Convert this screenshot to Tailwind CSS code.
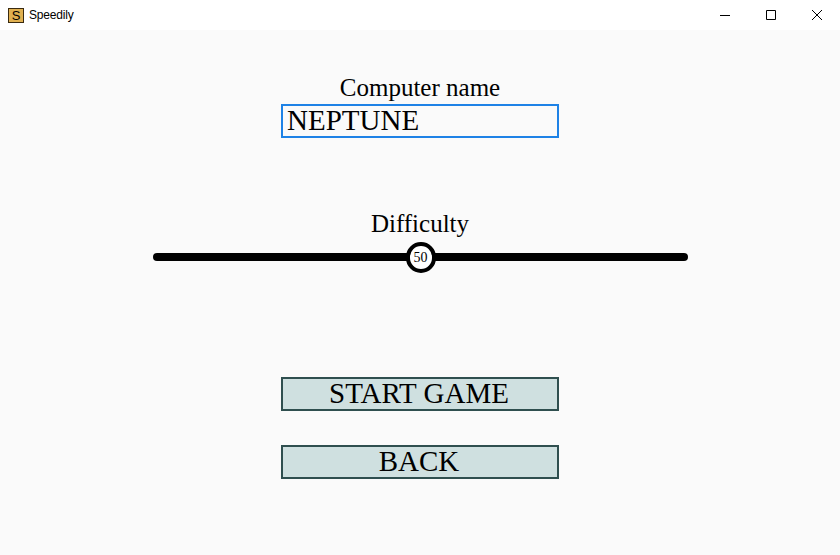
<!DOCTYPE html>
<html lang="en">
<head>
    <meta charset="UTF-8">
    <title>Speedily</title>
    <script src="https://cdn.jsdelivr.net/npm/@tailwindcss/browser@4"></script>
</head>
<body class="w-[840px] h-[555px] overflow-hidden bg-[#fafafa] font-['Liberation_Serif',serif] text-black">
    <!-- title bar -->
    <div class="h-[30px] bg-white flex items-center">
        <div class="ml-2 w-[16px] h-[15px] bg-[#e0b050] border border-[#3a2a10] flex items-center justify-center font-['Liberation_Sans',sans-serif] text-[13px] leading-none">S</div>
        <span class="ml-[5px] font-['Liberation_Sans',sans-serif] text-[12px] tracking-[-0.2px] leading-none">Speedily</span>
        <div class="ml-auto flex items-center">
            <div class="w-[46px] h-[30px] flex items-center justify-center">
                <svg width="10" height="10" viewBox="0 0 10 10"><path d="M0 5.5H10" stroke="#000" fill="none"/></svg>
            </div>
            <div class="w-[46px] h-[30px] flex items-center justify-center">
                <svg width="10" height="10" viewBox="0 0 10 10"><path d="M.5 .5H9.5V9.5H.5Z" stroke="#000" fill="none"/></svg>
            </div>
            <div class="w-[46px] h-[30px] flex items-center justify-center">
                <svg width="10" height="10" viewBox="0 0 10 10"><path d="M0 0L10 10M10 0L0 10" stroke="#000" fill="none"/></svg>
            </div>
        </div>
    </div>

    <div class="flex flex-col items-center">
        <div class="mt-[43px] mb-[1px] text-[25px] leading-[30px]">Computer name</div>
        <input value="NEPTUNE" class="w-[278px] h-[34px] border-2 border-[#1e82e6] px-[4px] text-[29px] outline-none bg-transparent">

        <div class="mt-[71px] text-[25px] leading-[30px]">Difficulty</div>
        <div class="relative w-[535px] h-[8px] mt-[14px] rounded-full bg-black">
            <div class="absolute left-[253px] top-[-11px] w-[30px] h-[31px] rounded-full border-[4px] border-black bg-white flex items-center justify-center text-[14px]">50</div>
        </div>

        <button class="mt-[116px] w-[278px] h-[34px] border-2 border-[#2f4f4f] bg-[#cfe0e0] text-[29px] leading-none pb-[2px] pr-[2px]">START GAME</button>
        <button class="mt-[34px] w-[278px] h-[34px] border-2 border-[#2f4f4f] bg-[#cfe0e0] text-[29px] leading-none pb-[2px] pr-[2px]">BACK</button>
    </div>
</body>
</html>
